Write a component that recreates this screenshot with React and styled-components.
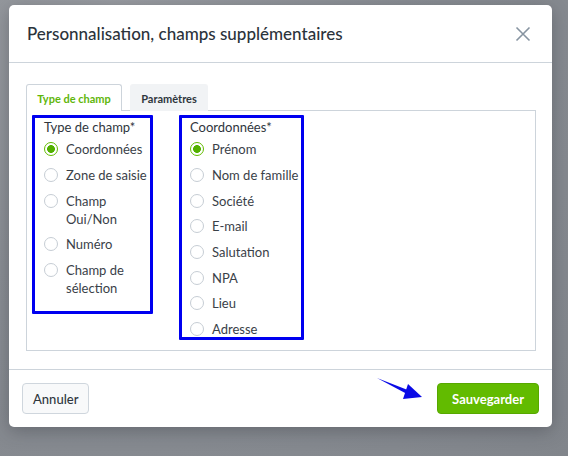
import styled, { createGlobalStyle } from 'styled-components'

const GlobalStyle = createGlobalStyle`
	html, body {
		margin: 0;
		padding: 0;
	}
	body {
		width: 568px;
		height: 456px;
		overflow: hidden;
		background: radial-gradient(ellipse at 20% 0%, #9a9da2 0%, #8a8e94 45%, #81858b 100%);
		font-family: Lato, 'Noto Sans', sans-serif;
		color: #323a42;
	}
`

const typeOptions = [
	{ lines: ['Coordonnées'], checked: true },
	{ lines: ['Zone de saisie'] },
	{ lines: ['Champ', 'Oui/Non'] },
	{ lines: ['Numéro'] },
	{ lines: ['Champ de', 'sélection'] },
]

const fieldOptions = [
	{ lines: ['Prénom'], checked: true },
	{ lines: ['Nom de famille'] },
	{ lines: ['Société'] },
	{ lines: ['E-mail'] },
	{ lines: ['Salutation'] },
	{ lines: ['NPA'] },
	{ lines: ['Lieu'] },
	{ lines: ['Adresse'] },
]

const RadioGroup = ({ title, options, width, height }) => (
	<GroupBox $width={width} $height={height}>
		<GroupTitle>{title}</GroupTitle>
		{options.map((item) => (
			<Option key={item.lines.join(' ')}>
				<Radio $checked={item.checked} />
				<OptionText>
					{item.lines.map((line) => (
						<span key={line}>{line}</span>
					))}
				</OptionText>
			</Option>
		))}
	</GroupBox>
)

const App = () => {
	return (
		<>
			<GlobalStyle />
			<Page>
				<Modal>
					<Header>
						<Title>Personnalisation, champs supplémentaires</Title>
						<Close aria-label='close'>
							<svg width='16' height='16' viewBox='0 0 16 16'>
								<path d='M1.5 1.5 L14.5 14.5 M14.5 1.5 L1.5 14.5' stroke='#8794a1' strokeWidth='1.6' fill='none' />
							</svg>
						</Close>
					</Header>
					<Body>
						<Tabs>
							<Tab $active $width='96px'>Type de champ</Tab>
							<Tab $width='78px'>Paramètres</Tab>
						</Tabs>
						<Panel>
							<RadioGroup title='Type de champ*' options={typeOptions} width='121px' />
							<RadioGroup title='Coordonnées*' options={fieldOptions} width='125px' height='225px' />
						</Panel>
					</Body>
					<Footer>
						<Button>Annuler</Button>
						<Arrow width='50' height='26' viewBox='0 0 50 26'>
							<path d='M1 1 L33 13.5 L31 17 Z' fill='#0a0ae6' />
							<path d='M32 7 L46 20 L27 22 Z' fill='#0a0ae6' />
						</Arrow>
						<Button $primary>Sauvegarder</Button>
					</Footer>
				</Modal>
			</Page>
		</>
	)
}
export default App

const Page = styled.div`
	padding: 5px 0 0 9px;
`

const Modal = styled.div`
	width: 543px;
	height: 422px;
	background: #fff;
	border-radius: 5px;
	box-shadow: 0 4px 18px rgba(40, 44, 52, 0.35);
	display: flex;
	flex-direction: column;
`

const Header = styled.header`
	height: 58px;
	box-sizing: border-box;
	padding: 0 21px 0 18px;
	display: flex;
	align-items: center;
	justify-content: space-between;
	border-bottom: 1px solid #cdd4db;
`

const Title = styled.h1`
	margin: 0;
	font-size: 17px;
	font-weight: 500;
	color: #2b333b;
`

const Close = styled.div`
	display: flex;
	cursor: pointer;
`

const Body = styled.div`
	padding: 21px 16px 18px 17px;
	display: flex;
	flex-direction: column;
`

const Tabs = styled.div`
	display: flex;
	gap: 8px;
`

const Tab = styled.div`
	width: ${(p) => p.$width};
	height: 27px;
	box-sizing: border-box;
	display: flex;
	align-items: center;
	justify-content: center;
	white-space: nowrap;
	font-size: 11px;
	font-weight: 700;
	border: 1px solid ${(p) => (p.$active ? '#cdd4db' : '#f1f3f5')};
	border-bottom: none;
	border-radius: 3px 3px 0 0;
	background: ${(p) => (p.$active ? '#fff' : '#f1f3f5')};
	color: ${(p) => (p.$active ? '#5fb60a' : '#2f363d')};
	margin-bottom: -1px;
	position: relative;
	z-index: 1;
`

const Panel = styled.div`
	height: 241px;
	box-sizing: border-box;
	border: 1px solid #cdd4db;
	padding: 4px 5px;
	display: flex;
	align-items: flex-start;
	gap: 26px;
`

const GroupBox = styled.div`
	width: ${(p) => p.$width};
	height: ${(p) => p.$height || 'auto'};
	box-sizing: border-box;
	border: 3px solid #0000f0;
	border-radius: 1px;
	padding: 0 0 14px 9px;
	overflow: hidden;
	display: flex;
	flex-direction: column;
	gap: 7.7px;
	&:last-child {
		padding-left: 8px;
	}
`

const GroupTitle = styled.div`
	font-size: 13px;
	line-height: 18px;
	color: #2f363d;
	white-space: nowrap;
	margin-bottom: -3.5px;
`

const Option = styled.label`
	display: flex;
	align-items: flex-start;
	gap: 8px;
	font-size: 13px;
	line-height: 18px;
	color: #3a4148;
`

const OptionText = styled.span`
	display: flex;
	flex-direction: column;
	white-space: nowrap;
`

const Radio = styled.span`
	flex: none;
	width: 14px;
	height: 14px;
	margin-top: 2px;
	box-sizing: border-box;
	border-radius: 50%;
	border: 1px solid ${(p) => (p.$checked ? '#62bb00' : '#c6cdd4')};
	background: ${(p) => (p.$checked ? 'radial-gradient(circle, #52b000 0 3.6px, #fff 4.2px)' : '#fff')};
`

const Footer = styled.footer`
	margin-top: auto;
	height: 58px;
	box-sizing: border-box;
	border-top: 1px solid #cdd4db;
	padding: 0 13px;
	display: flex;
	align-items: center;
	justify-content: space-between;
	position: relative;
`

const Arrow = styled.svg`
	position: absolute;
	left: 367px;
	top: 7px;
`

const Button = styled.button`
	height: 31px;
	box-sizing: border-box;
	padding: 0 ${(p) => (p.$primary ? '14px' : '10px')};
	border-radius: 4px;
	font-family: Lato, 'Noto Sans', sans-serif;
	font-size: 13px;
	font-weight: ${(p) => (p.$primary ? 700 : 500)};
	border: 1px solid ${(p) => (p.$primary ? '#57a800' : '#cfd6dd')};
	background: ${(p) => (p.$primary ? '#62bb00' : '#f8f9fa')};
	color: ${(p) => (p.$primary ? '#fff' : '#2f363d')};
	cursor: pointer;
`
